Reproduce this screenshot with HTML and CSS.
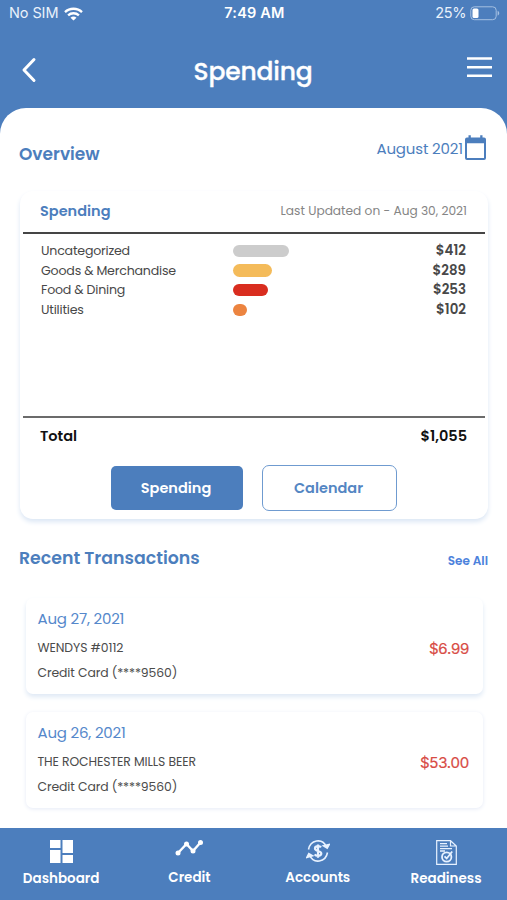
FILE: index.html
```html
<!DOCTYPE html>
<html lang="en">
<head>
<meta charset="utf-8">
<title>Spending</title>
<link rel="stylesheet" href="styles.css">
</head>
<body>
<div class="app">
  <div class="status">
    <div class="carrier"><span class="sim">No SIM</span>
      <svg width="19" height="14" viewBox="0 0 19 14" fill="none" stroke="#fff" stroke-width="2.3"><path d="M1 5.1C5.6.6 13.4.6 18 5.1M4.1 8.4c3-2.9 7.8-2.9 10.8 0"/><path d="M9.500 13.600 6.500 10.700c1.700-1.500 4.300-1.500 6 0z" fill="#fff" stroke="none"/></svg>
    </div>
    <span class="clock">7:49 AM</span>
    <div class="power"><span class="percent">25%</span>
      <svg width="30" height="15" viewBox="0 0 30 15"><rect x=".8" y=".8" width="25.400" height="12.900" rx="3.500" fill="none" stroke="#a5c0e2" stroke-width="1"/><rect x="2.500" y="2.500" width="6" height="9.500" rx="1.500" fill="#fff"/><path d="M27.600 4.800c2.200.8 2.200 4 0 4.800z" fill="#a5c0e2"/></svg>
    </div>
  </div>
  <header class="header">
    <svg class="back" width="16" height="26" viewBox="0 0 16 26" fill="none" stroke="#fff" stroke-width="3" stroke-linecap="round" stroke-linejoin="round"><path d="M13 2.500 3 13 13 23.500"/></svg>
    <h1><span class="title">Spending</span></h1>
    <svg class="menu" width="25" height="21" viewBox="0 0 25 21" stroke="#fff" stroke-width="2.400"><path d="M0 1.500h25M0 10.200h25M0 18.700h25"/></svg>
  </header>
  <main class="sheet">
    <section class="overview">
      <h2 class="overview-title">Overview</h2>
      <div class="month"><span class="month-name">August 2021</span>
        <svg width="21" height="26" viewBox="0 0 21 26" fill="#4c7ebd"><path fill-rule="evenodd" d="M2 2.500h1.500V.3h2.300v2.200h9.400V.3h2.300v2.200H19q2 0 2 2V23q0 2-2 2H2q-2 0-2-2V4.500q0-2 2-2zM2 8.200v14.800h17V8.200z"/></svg>
      </div>
    </section>
    <section class="summary">
      <div class="summary-head"><h3 class="summary-title">Spending</h3><span class="updated">Last Updated on - Aug 30, 2021</span></div>
      <div class="categories">
        <div class="category"><span class="name">Uncategorized</span><i class="bar gray"></i><b class="amount">$412</b></div>
        <div class="category"><span class="name">Goods &amp; Merchandise</span><i class="bar yellow"></i><b class="amount">$289</b></div>
        <div class="category"><span class="name">Food &amp; Dining</span><i class="bar red"></i><b class="amount">$253</b></div>
        <div class="category"><span class="name">Utilities</span><i class="bar orange"></i><b class="amount">$102</b></div>
      </div>
      <div class="total"><b class="total-name">Total</b><b class="total-sum">$1,055</b></div>
      <div class="actions"><button class="primary">Spending</button><button class="secondary">Calendar</button></div>
    </section>
    <div class="recent"><h2 class="recent-title">Recent Transactions</h2><a class="see-all">See All</a></div>
    <article class="transaction">
      <div class="details"><span class="date">Aug 27, 2021</span><span class="merchant">WENDYS #0112</span><span class="account">Credit Card (****9560)</span></div>
      <span class="price">$6.99</span>
    </article>
    <article class="transaction">
      <div class="details"><span class="date">Aug 26, 2021</span><span class="merchant">THE ROCHESTER MILLS BEER</span><span class="account">Credit Card (****9560)</span></div>
      <span class="price">$53.00</span>
    </article>
  </main>
  <nav class="tabs">
    <a class="tab low"><svg width="23" height="23" viewBox="0 0 23 23" fill="#fff"><path d="M0 0h10.500v8H0zM12.500 0H23v13H12.500zM0 10h10.500v13H0zM12.500 15H23v8H12.500z"/></svg><span>Dashboard</span></a>
    <a class="tab"><svg width="28" height="23" viewBox="0 0 28 23" fill="#fff"><path d="m3 13 8.500-9 6.500 7 7.500-8.500" fill="none" stroke="#fff" stroke-width="2.400"/><circle cx="3" cy="13" r="2.500"/><circle cx="11.500" cy="4" r="2.500"/><circle cx="18" cy="11" r="2.500"/><circle cx="25.500" cy="2.500" r="2.500"/></svg><span>Credit</span></a>
    <a class="tab"><svg width="24" height="23" viewBox="0 0 24 23" fill="none" stroke="#e8f2ff" stroke-width="1.600"><path d="M2.500 9.500C4.300-.1 16-2.500 20.300 6.500M21.500 12.500C19.700 22.500 7.500 24 3.700 15.500"/><path d="m17.500 5.800 3.700 2.400L23.200 4.500zM.8 17.500l2-3.800L6.500 15.800z" fill="#e8f2ff"/><path d="M15 7.400c-1.500-2.200-6-1.600-6 1 0 3.200 6.300 2 6.300 5.200 0 2.700-5 3.200-6.600.7M12 4.500v13.200" stroke-width="2.200"/></svg><span>Accounts</span></a>
    <a class="tab low"><svg width="21" height="25" viewBox="0 0 21 25" fill="none" stroke="#e8f2ff" stroke-width="1.200"><path d="M14.500.7H.7v23.600h19.600V6zM14.500.7V6h5.800"/><path d="M4 3.700h7M4 6.200h8M4 8.700h12M4 11h5" stroke-width="1.300"/><circle cx="10.700" cy="17" r="4.700" stroke-width="1.800"/><path d="m8.500 16.300 2.200 2.200 5.500-7" stroke-width="1.800"/></svg><span>Readiness</span></a>
  </nav>
</div>
</body>
</html>
```

FILE: styles.css
```css
* { box-sizing: border-box; }
body { margin: 0; font-family: Poppins, Inter, sans-serif; background: #4c7ebd; }
h1, h2, h3 { margin: 0; font-weight: 600; }
span, h2, h3, b, a, button { white-space: nowrap; }
svg { display: block; flex: none; }
.app { width: 507px; height: 900px; display: flex; flex-direction: column; overflow: hidden; }

.status { height: 28px; padding: 0 7px 0 9px; display: grid; grid-template-columns: 1fr auto 1fr; align-items: center; color: #fff; font-family: Inter, sans-serif; font-size: 14.5px; line-height: 16px; }
.status span { margin-top: -2px; }
.carrier, .power { display: flex; align-items: center; }
.carrier { gap: 6px; color: #e9f1fb; letter-spacing: -.1px; }
.carrier svg, .power svg { margin-top: -1px; }
.power { justify-content: flex-end; gap: 4px; color: #e9f1fb; letter-spacing: -.4px; }
.clock { font-weight: 600; font-size: 14.5px; letter-spacing: .2px; }

.header { height: 80px; padding: 0 15px 0 21px; display: grid; grid-template-columns: 25px 1fr 25px; align-items: start; color: #fff; }
.back { margin-top: 29px; }
.menu { margin-top: 29px; }
.header h1 { font-size: 25px; font-weight: 500; letter-spacing: -.2px; -webkit-text-stroke: .3px #fff; line-height: 36px; margin: 26px 7px 0 0; text-align: center; }

.sheet { height: 720px; background: #fff; border-radius: 26px 26px 0 0; padding: 27px 19px 0 20px; }
.overview { display: flex; justify-content: space-between; height: 56px; color: #4c7ebd; }
.overview-title { font-size: 17px; line-height: 24px; margin: 7px 0 0 -1px; }
.month { display: flex; height: 26px; gap: 2px; margin-right: 2px; }
.month-name { font-size: 15px; letter-spacing: -.15px; line-height: 27px; }

.summary { height: 328px; border-radius: 13px; padding: 0 3px; background: #fff; box-shadow: 0 3px 5px #dce7f5; }
.summary-head { height: 43px; padding: 0 18px 0 17px; display: flex; justify-content: space-between; line-height: 40px; border-bottom: 2px solid #454545; }
.summary-title { font-size: 14.5px; color: #4c7ebd; }
.updated { font-size: 12.2px; color: #858585; }
.categories { height: 184px; padding: 7px 19px 0 18px; border-bottom: 2px solid #6b6b6b; }
.category { height: 19.600px; display: grid; grid-template-columns: 192.200px 1fr auto; align-items: center; font-size: 13px; color: #484848; }
.name { font-size: 12.600px; letter-spacing: -.2px; }
.bar { height: 12.500px; border-radius: 7px; }
.gray { width: 56px; background: #cccccc; }
.yellow { width: 39px; background: #f4bb5a; }
.red { width: 34.500px; background: #d92d1f; }
.orange { width: 14px; background: #ec8440; }
.amount { font-weight: 600; font-size: 13.400px; }
.total { height: 47px; padding: 0 18px 0 17px; display: flex; justify-content: space-between; font-size: 14.500px; line-height: 37px; color: #111; }
.total b { font-weight: 600; }
.actions { display: flex; justify-content: center; align-items: center; gap: 19px; }
button { font: 600 14.500px Poppins, Inter, sans-serif; padding: 0 2px 0 0; }
.primary { width: 132px; height: 44px; border: 0; border-radius: 5px; background: #4c7ebd; color: #fff; }
.secondary { width: 135px; height: 46px; border: 1.500px solid #6f9bd0; border-radius: 7px; background: #fff; color: #5486c3; }

.recent { height: 79px; display: flex; justify-content: space-between; line-height: 24px; padding-top: 27px; }
.recent-title { font-size: 17.350px; margin-left: -1px; color: #4c7ebd; }
.see-all { font-size: 12px; font-weight: 600; color: #4c82dc; line-height: 29px; }
.transaction { height: 96px; margin: 0 5px 18px 6px; padding: 8px 14px 0 12px; display: flex; justify-content: space-between; border-radius: 7px; background: #fff; box-shadow: 0 3px 5px #dfe9f5; }
.transaction:last-child { box-shadow: 0 1px 4px #e5eaf6; }
.details { display: flex; flex-direction: column; margin-left: -.5px; color: #4b4b4b; font-size: 12.400px; letter-spacing: -.1px; }
.date { font-size: 15px; letter-spacing: -.2px; line-height: 25px; color: #5588cb; }
.merchant { line-height: 34px; }
.account { line-height: 16px; }
.price { font-family: Inter, sans-serif; font-size: 15px; letter-spacing: -.25px; -webkit-text-stroke: .2px #d84c45; color: #d84c45; line-height: 85px; }

.tabs { height: 72px; display: grid; grid-template-columns: repeat(4, 128.300px); padding-left: 0; margin-left: -3px; color: #fff; font-size: 13.500px; font-weight: 600; }
.tab { display: flex; flex-direction: column; align-items: center; padding-top: 12px; }
.tab svg { height: 23px; margin-bottom: 5px; }
.low svg { height: 25px; margin-bottom: 4px; }
.tab:first-child svg { height: 23px; margin-bottom: 6px; }
.tab span { line-height: 20px; }
```
